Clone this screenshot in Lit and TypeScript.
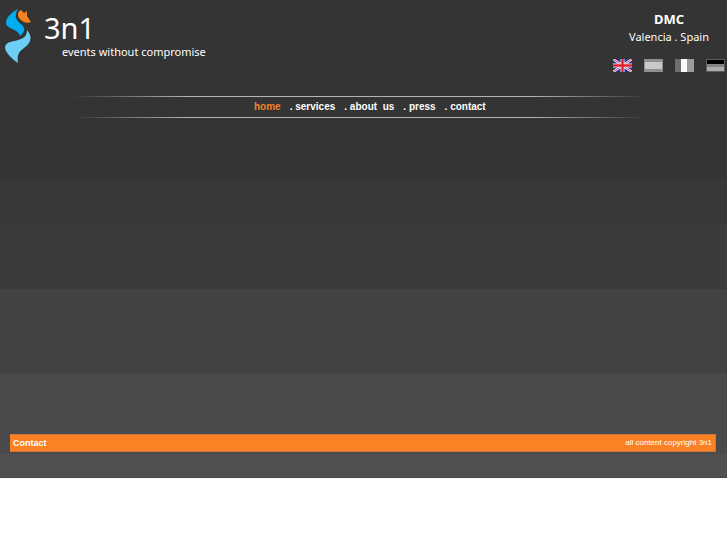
import { LitElement, html, svg, css } from "lit";
import { customElement, state } from "lit/decorators.js";

const PAGES = ["home", "services", "about\u00a0\u00a0us", "press", "contact"];

const FLAGS = [
  {
    name: "English",
    art: svg`<rect width="19" height="13" fill="#1f3192"/>
      <path d="M0 0L19 13M19 0L0 13" stroke="#f0f0fa" stroke-width="2.400"/>
      <path d="M0 0L19 13M19 0L0 13" stroke="#e04050" stroke-width="1"/>
      <path d="M9.500 0V13M0 6.500H19" stroke="#f4f4fa" stroke-width="4"/>
      <path d="M9.500 0V13M0 6.500H19" stroke="#e01e2c" stroke-width="2.400"/>`,
  },
  {
    name: "Español",
    art: svg`<rect width="19" height="13" fill="#8f8f8f"/>
      <rect x="1" y="3" width="17" height="7" fill="#c9c9c9"/>`,
  },
  {
    name: "Français",
    art: svg`<rect width="19" height="13" fill="#9c9c9c"/>
      <rect width="6" height="13" fill="#6e6e6e"/>
      <rect x="6" width="6" height="13" fill="#fafafa"/>`,
  },
  {
    name: "Deutsch",
    art: svg`<rect width="19" height="13" fill="#5c5c5c"/>
      <rect x="1" y="1" width="17" height="4" fill="#000"/>
      <rect x="1" y="5" width="17" height="3" fill="#858585"/>
      <rect x="1" y="8" width="17" height="4" fill="#adadad"/>`,
  },
];

@customElement("app-root")
export class AppRoot extends LitElement {
  @state() private page = "home";

  static styles = css`
    :host {
      display: block;
      color: #fff;
      font-family: "Liberation Sans", Arial, sans-serif;
    }
    a {
      color: inherit;
      text-decoration: none;
    }
    .page {
      display: flex;
      flex-direction: column;
      background: linear-gradient(
        #343434 179px, #363837 179px, #383736 224px, #3b3b3b 224px,
        #3b3b3b 289px, #424242 289px, #424242 373px, #4a4a4a 373px,
        #4a4a4a 454px, #505050 454px
      );
      border-bottom: 1px solid #474747;
    }
    .top {
      display: flex;
      justify-content: space-between;
      align-items: flex-start;
      padding: 8px 2px 0 4px;
    }
    .brand {
      display: flex;
      gap: 12px;
      font-family: "Noto Sans", "Open Sans", sans-serif;
    }
    .mark {
      width: 28px;
      height: 56px;
    }
    .name {
      margin: 2px 0 0;
      font-size: 29px;
      line-height: 36px;
      font-weight: 400;
    }
    .tagline {
      margin: 0 0 0 18px;
      font-size: 11px;
      line-height: 12px;
    }
    .side {
      font-family: "Noto Sans", "Open Sans", sans-serif;
      text-align: center;
    }
    .dmc {
      margin: 2px 0 0;
      font-size: 13px;
      line-height: 18px;
      font-weight: 700;
    }
    .place {
      margin: 0;
      font-size: 11px;
      line-height: 18px;
    }
    .flags {
      display: flex;
      gap: 12px;
      margin-top: 13px;
    }
    .flag,
    .flag svg {
      display: block;
      width: 19px;
      height: 13px;
    }
    .nav {
      width: 79%;
      margin: 24px 0 0 10%;
      border: solid;
      border-width: 1px 0;
      border-image: linear-gradient(90deg, transparent, #b4b4b4 20%, #b4b4b4 80%, transparent) 1;
    }
    .links {
      display: flex;
      justify-content: center;
      gap: 9px;
      margin: 0;
      padding: 0 0 0 20px;
      list-style: none;
      font-size: 10px;
      line-height: 20px;
      font-weight: 700;
    }
    .links li + li::before {
      content: ". ";
    }
    .current {
      color: #f58220;
    }
    .content {
      min-height: 316px;
    }
    .footer {
      display: flex;
      justify-content: space-between;
      margin: 0 11px 25px 10px;
      padding: 0 3px;
      border: 1px solid #c9783a;
      border-left-width: 0;
      background: #fb8224;
      line-height: 16px;
      font-size: 8px;
    }
    .contact {
      font-size: 9px;
      font-weight: 700;
    }
  `;

  render() {
    return html`<div class="page">
      <header class="top">
        <div class="brand">
          <svg class="mark" viewBox="0 0 28 56" aria-hidden="true">
            <path fill="#00adef" d="M14 1C8 4 2 9 2 15C2 21 15 21 16 28C20 25 22 21 18 17C13 13 9 9 14 1Z"/>
            <path fill="#f58220" d="M17 2L20 5L23 3L23 8L27 14C23 16 18 14 15 10C13 7 14 3 17 2Z"/>
            <path fill="#6dcff6" d="M23 22C29 29 27 35 20 40C14 44 13 48 14 55C8 51 2 45 1 40C1 33 10 34 17 31C22 29 23 26 23 22Z"/>
          </svg>
          <div>
            <h1 class="name">3n1</h1>
            <p class="tagline">events without compromise</p>
          </div>
        </div>
        <div class="side">
          <p class="dmc">DMC</p>
          <p class="place">Valencia . Spain</p>
          <div class="flags">
            ${FLAGS.map(
              (f) => html`<a class="flag" href="#" aria-label=${f.name}>
                <svg viewBox="0 0 19 13" aria-hidden="true">${f.art}</svg>
              </a>`
            )}
          </div>
        </div>
      </header>
      <nav class="nav">
        <ul class="links">
          ${PAGES.map(
            (p) => html`<li><a href="#" class=${p === this.page ? "current" : ""} @click=${() => (this.page = p)}>${p}</a></li>`
          )}
        </ul>
      </nav>
      <main class="content"></main>
      <footer class="footer">
        <a class="contact" href="#">Contact</a>
        <span>all content copyright 3n1</span>
      </footer>
    </div>`;
  }
}
